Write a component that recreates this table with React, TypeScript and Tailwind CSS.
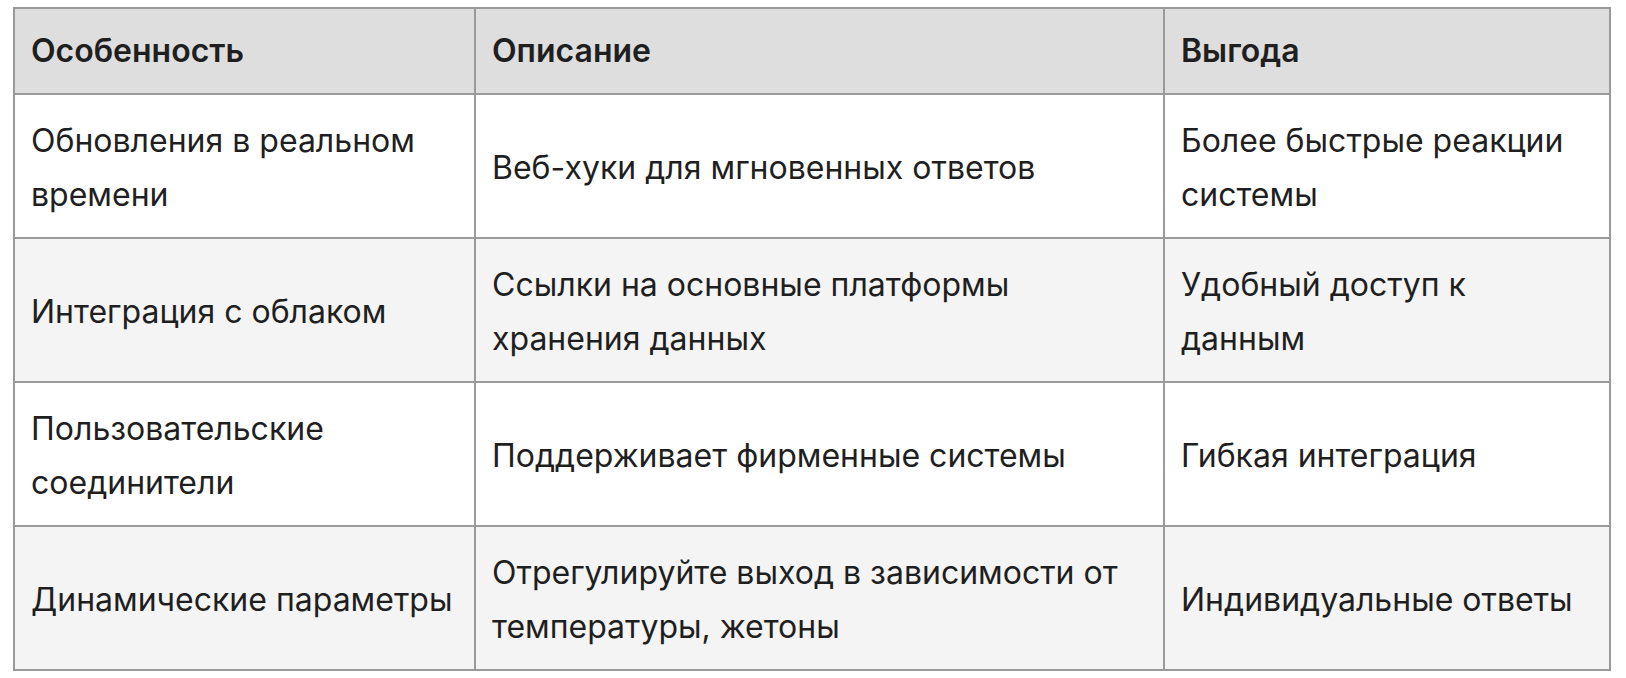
import React from "react";

const rows: { a: string[]; b: string[]; c: string[] }[] = [
  { a: ["Обновления в реальном", "времени"], b: ["Веб-хуки для мгновенных ответов"], c: ["Более быстрые реакции", "системы"] },
  { a: ["Интеграция с облаком"], b: ["Ссылки на основные платформы", "хранения данных"], c: ["Удобный доступ к", "данным"] },
  { a: ["Пользовательские", "соединители"], b: ["Поддерживает фирменные системы"], c: ["Гибкая интеграция"] },
  { a: ["Динамические параметры"], b: ["Отрегулируйте выход в зависимости от", "температуры, жетоны"], c: ["Индивидуальные ответы"] },
];

function Lines({ lines }: { lines: string[] }) {
  return (
    <>
      {lines.map((l, i) => (
        <div key={i} className="whitespace-nowrap">
          {l}
        </div>
      ))}
    </>
  );
}

export default function App() {
  const cell = "border-2 border-[#9a9a9a] px-[16px] align-middle";
  const body = `${cell} pt-[4px] pb-0`;
  return (
    <div className="w-[1626px] h-[678px] bg-white pl-[13px] pt-[7px] font-['Inter','Noto_Sans',sans-serif] text-[#1f1f1f]">
      <table className="border-collapse table-fixed w-[1596px] text-[32px] leading-[54px]">
        <colgroup>
          <col className="w-[461px]" />
          <col className="w-[689px]" />
          <col className="w-[446px]" />
        </colgroup>
        <thead>
          <tr className="h-[86px] bg-[#dedede]">
            <th className={`${cell} text-left font-semibold`}>Особенность</th>
            <th className={`${cell} text-left font-semibold`}>Описание</th>
            <th className={`${cell} text-left font-semibold`}>Выгода</th>
          </tr>
        </thead>
        <tbody>
          {rows.map((r, i) => (
            <tr key={i} className={`h-[144px] ${i % 2 === 1 ? "bg-[#f4f4f4]" : "bg-white"}`}>
              <td className={body}>
                <Lines lines={r.a} />
              </td>
              <td className={body}>
                <Lines lines={r.b} />
              </td>
              <td className={body}>
                <Lines lines={r.c} />
              </td>
            </tr>
          ))}
        </tbody>
      </table>
    </div>
  );
}
